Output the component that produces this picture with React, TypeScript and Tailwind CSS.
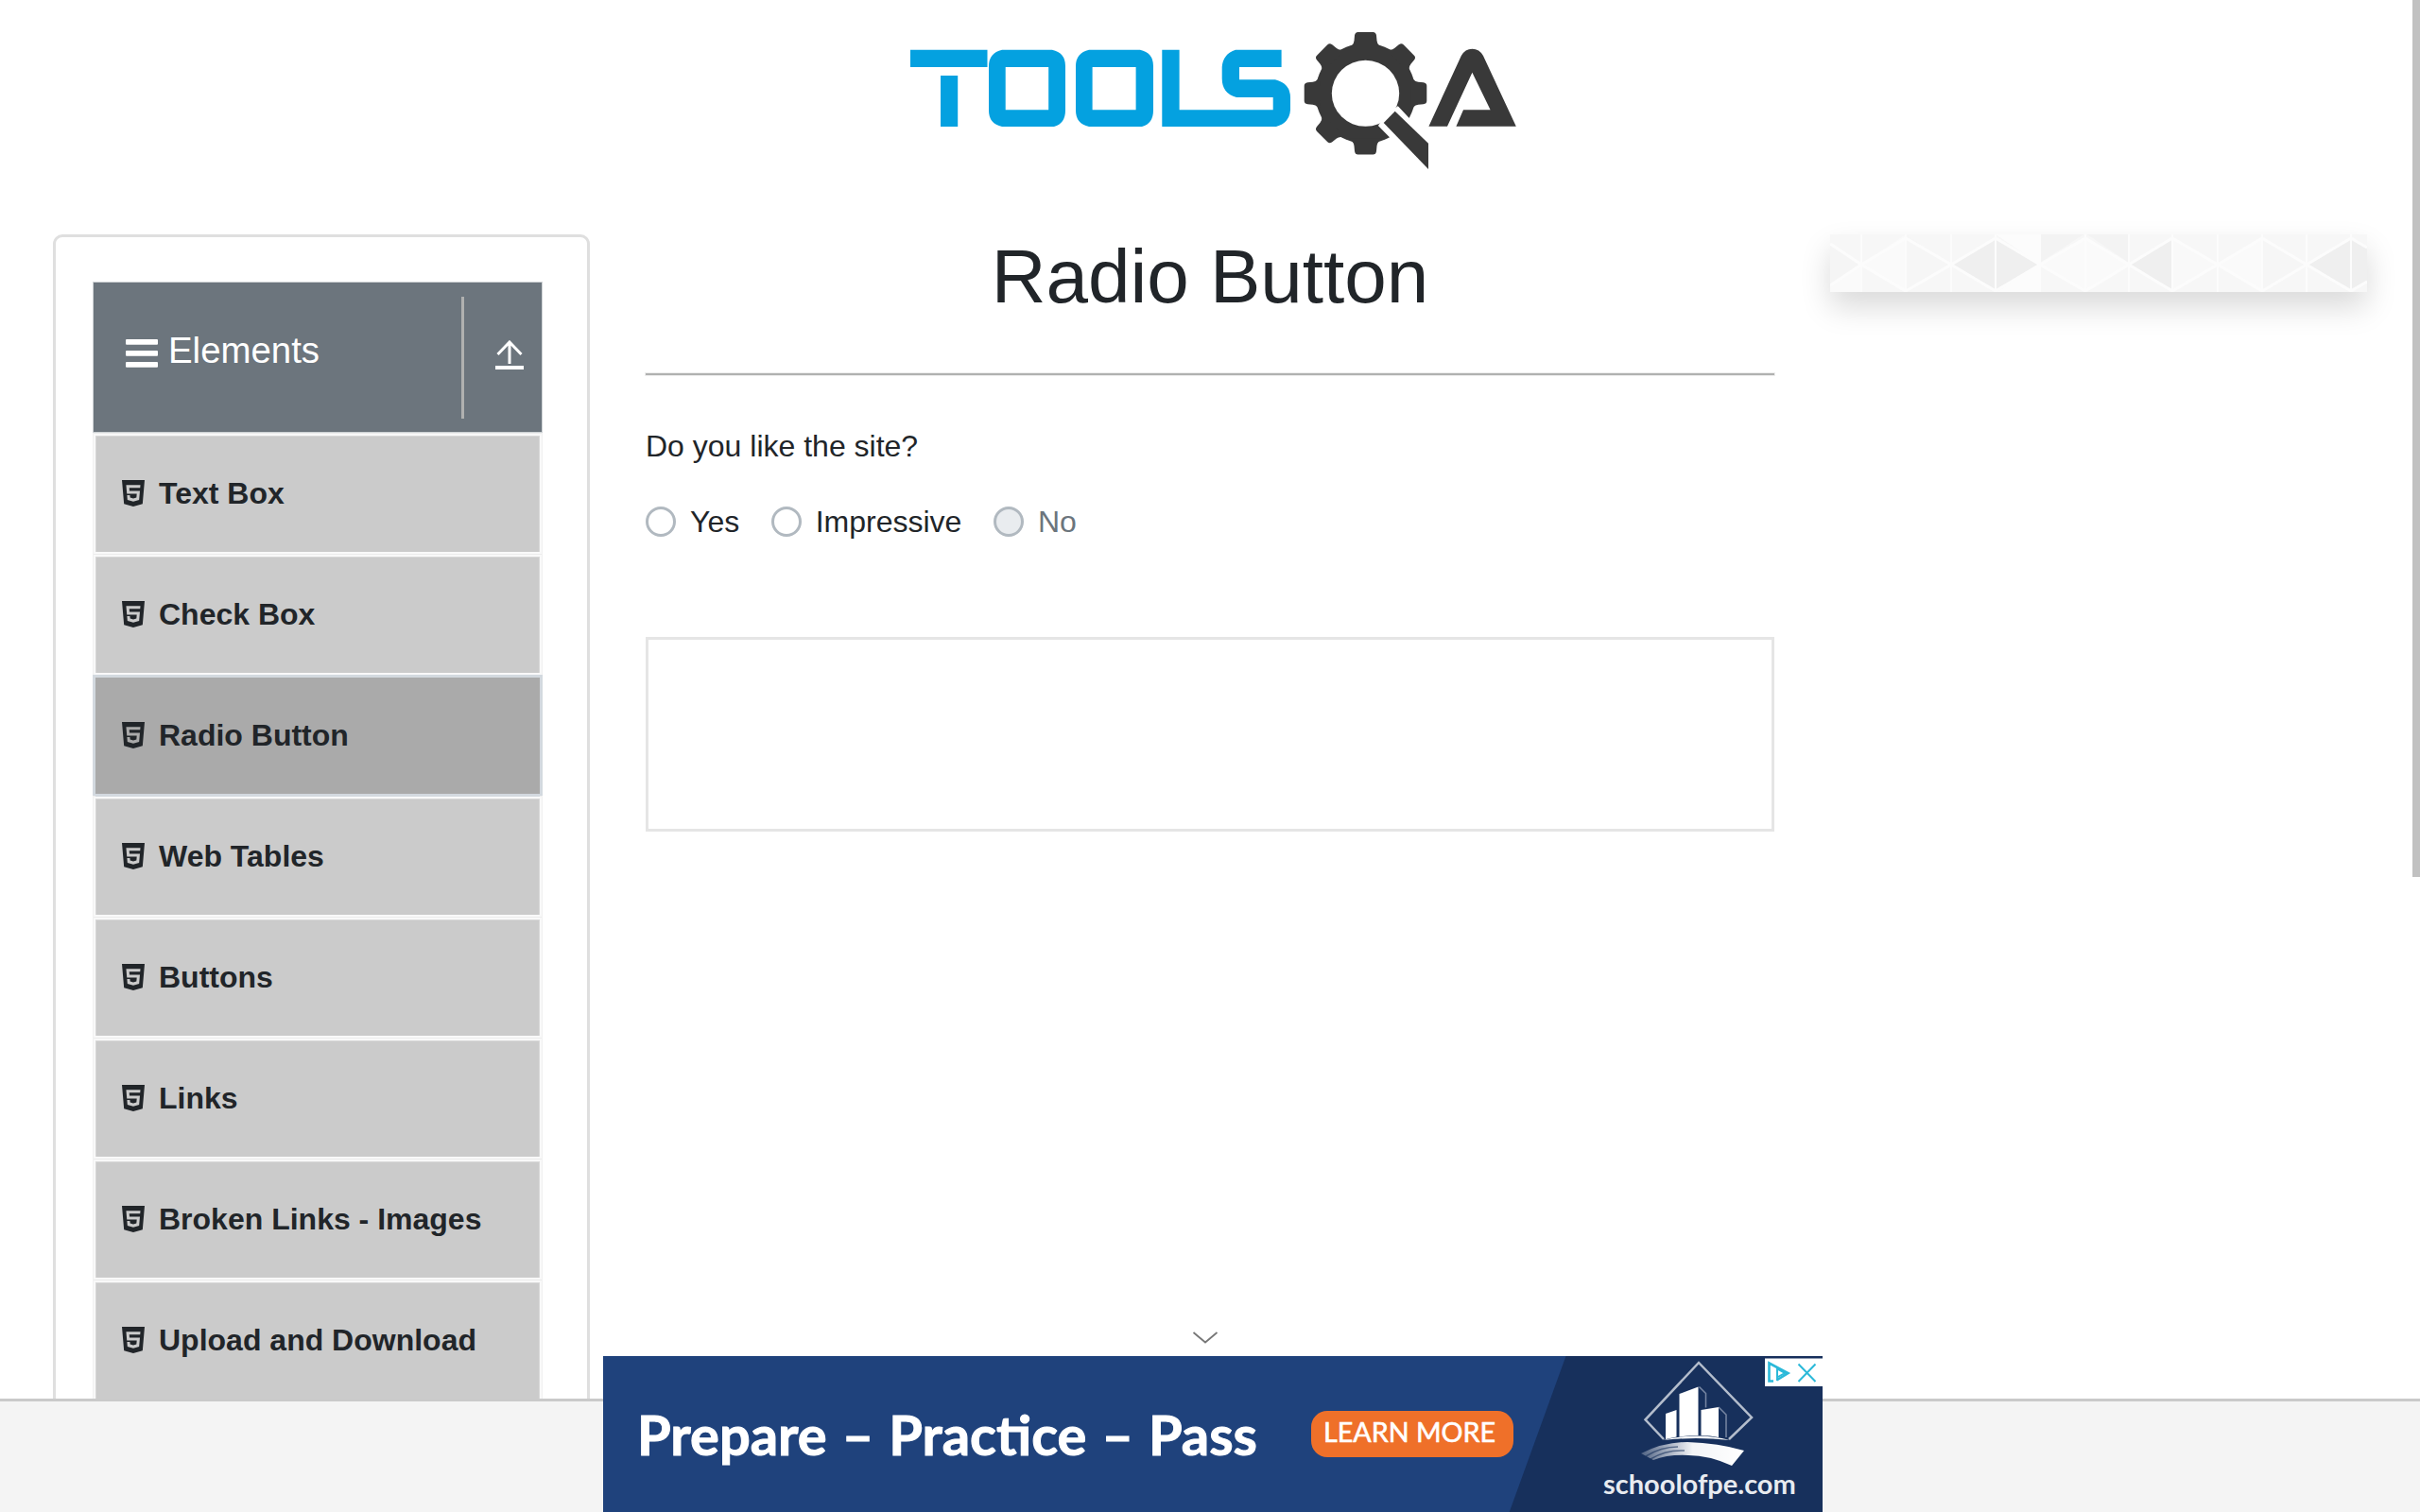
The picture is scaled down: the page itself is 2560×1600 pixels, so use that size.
import { IoLogoHtml5 } from "react-icons/io5";

const items = [
  "Text Box",
  "Check Box",
  "Radio Button",
  "Web Tables",
  "Buttons",
  "Links",
  "Broken Links - Images",
  "Upload and Download",
];

function Logo() {
  return (
    <svg width="644" height="150" viewBox="962 33 644 150" className="block">
      <g fill="#04a1e0">
        <path d="M963 52.7h81.5v18.3h-81.5zM995 80h18.2v54h-18.2z" />
        <path fillRule="evenodd" d="M1060 52.7h53q14 3 14 17v47q0 14-12 17.3h-55q-14-3-14-17v-47q0-14 14-17.3zM1063.7 71v45.3h45.5V71z" />
        <path fillRule="evenodd" d="M1152 52.7h54q14 3 14 17v47q0 14-12 17.3h-56q-14-3-14-17v-47q0-14 14-17.3zM1155.6 71v45.3h46V71z" />
        <path d="M1229.3 52.7h18.3v63.6h99.1V103H1308q-15.300-4-15.300-20V71q1-14 14.300-18.300h48.600V71H1311v13.300h38q16 4 16 19v13q-1 14-15 17.700h-120.700z" />
      </g>
      <g fill="#393939">
        <circle cx="1444.500" cy="98.800" r="53" />
        {[0, 45, 90, 180, 225, 270, 315].map((a) => (
          <path
            key={a}
            transform={`rotate(${a} 1444.500 98.800)`}
            d="M1424 51q8-2 8.500-8l.5-5.500q.5-3.500 3.500-3.500h16q3 0 3.500 3.500l.5 5.500q.5 6 8.500 8z"
          />
        ))}
        <ellipse cx="1444.500" cy="98.800" rx="35.700" ry="35" fill="#fff" />
        <path d="M1478.800 112.300l13.400 14.200 22 20v38l-44.500-39.500-11.800-12 8-12z" fill="#fff" />
        <path d="M1475.700 117.700L1463.700 130 1511 179v-27.300z" />
        <path d="M1511.400 133.700L1545.800 59q4-7.300 11.600-7.300T1569 59l34.800 74.700h-63.400l7.600-17.400h28.600l-19.200-39.600-26.400 57z" />
      </g>
    </svg>
  );
}

const tris: [string, string][] = [
  ["0,10 33,32 0,54", "#f5f5f5"],
  ["0,62 0,54 33,32 33,62", "#fafafa"],
  ["33,32 80,0 80,62", "#fafafa"],
  ["80,0 128,32 80,62", "#f6f6f6"],
  ["128,32 175,5 175,58", "#efefef"],
  ["175,5 222,32 175,58", "#efefef"],
  ["175,0 222,0 222,32", "#fcfcfc"],
  ["175,62 222,62 222,32", "#fcfcfc"],
  ["222,32 270,4 270,60", "#fafafa"],
  ["222,0 268,0 222,30", "#f3f3f3"],
  ["272,0 316,0 316,30", "#f3f3f3"],
  ["270,4 316,32 270,60", "#fafafa"],
  ["316,32 362,5 362,58", "#efefef"],
  ["362,4 410,32 362,60", "#f9f9f9"],
  ["410,32 457,4 457,60", "#fafafa"],
  ["457,4 504,32 457,60", "#f6f6f6"],
  ["504,32 551,5 551,58", "#efefef"],
  ["551,5 568,15 568,49 551,58", "#efefef"],
];

function Banner() {
  return (
    <svg width="568" height="61" viewBox="0 0 568 61" className="block">
      <rect width="568" height="62" fill="#f7f7f7" />
      {tris.map(([p, c]) => (
        <polygon key={p} points={p} fill={c} />
      ))}
      <g stroke="#fcfcfc" strokeWidth="3" fill="none">
        <path d="M0 10L33 32 0 54M33 32L80 4l48 28-48 28zM128 32l47-28 47 28-47 28zM222 32l48-28 46 28-46 28zM316 32l46-28 48 28-48 28zM410 32l47-28 47 28-47 28zM568 14l-17-10-47 28 47 28 17-10" />
        <path d="M33 0v62M80 0v62M128 0v62M175 0v62M222 0v62M270 0v62M316 0v62M362 0v62M410 0v62M457 0v62M504 0v62M551 0v62" strokeWidth="2" />
      </g>
    </svg>
  );
}

function Radio({ label, disabled = false }: { label: string; disabled?: boolean }) {
  return (
    <label className={disabled ? "flex h-12 items-center gap-[15px] text-[#6c757d]" : "flex h-12 items-center gap-[15px]"}>
      <span className={disabled ? "size-8 rounded-full border-[3px] border-[#b1b9c0] bg-[#e9ecef]" : "size-8 rounded-full border-[3px] border-[#b1b9c0] bg-white"} />
      <span>{label}</span>
    </label>
  );
}

function Ad() {
  return (
    <div className="relative h-[165px] w-[1290px] overflow-hidden bg-[#1f427c] font-[Lato] text-white">
      <svg width="1290" height="165" viewBox="638 1435 1290 165" className="absolute inset-0">
        <defs>
          <linearGradient id="swoosh">
            <stop offset="0" stopColor="#fff" stopOpacity="0.25" />
            <stop offset="0.5" stopColor="#fff" stopOpacity="0.95" />
            <stop offset="1" stopColor="#fff" />
          </linearGradient>
        </defs>
        <path d="M1656.500 1435H1928v165H1596.700z" fill="#17305c" />
        <path d="M1760 1523l-19.500-20.700 56.500-60.300 56 58-24 23" fill="none" stroke="#b4bdcc" strokeWidth="2.500" />
        <g fill="#fff">
          <path d="M1762 1496l11.500-4v28.500l-11.500 2.500zM1776.500 1475l20-7.500v51.500q-10 0-20 1.500zM1799.500 1492l18.500-3v32q-9-2-18.500-2z" />
          <path d="M1759 1524q37-9 71 0-36-4-71 0z" />
          <path d="M1736 1538q24-12 49-12 33 1 60 9l-13 16q-24-11-46-11-22-1-37 5z" fill="url(#swoosh)" />
        </g>
        <path d="M1741 1541q16-10 34-10M1746 1544q16-10 36-9" stroke="#17305c" strokeOpacity="0.6" strokeWidth="1.500" fill="none" />
        <path d="M1797.500 1467.500l7 7v15M1818 1489l8 8v24" stroke="#7887a3" strokeWidth="1.500" fill="none" />
        <path d="M1867 1437.500h61v29.500h-61z" fill="#fff" />
        <g fill="none" stroke="#2bb9d9">
          <path d="M1876 1461.500h-4.500v-19l20 10.500-12 7.500" strokeWidth="2.600" />
          <path d="M1880 1461v-12.500l8 4.500-8 4.500" strokeWidth="2" />
          <path d="M1902.500 1443.500l18 18.500M1920.500 1443.500l-18 18.500" strokeWidth="2" />
        </g>
      </svg>
      <div className="absolute top-[48px] left-[36px] text-[57.800px] leading-[70px] font-bold whitespace-nowrap [word-spacing:2px] [-webkit-text-stroke:1px_white]">Prepare – Practice – Pass</div>
      <div className="absolute top-[58px] left-[749px] flex h-[49px] w-[214px] items-center justify-center rounded-[17px] bg-[#ef7029] pr-1.5 pb-1.5 text-[28.700px] whitespace-nowrap [-webkit-text-stroke:0.6px_white]">LEARN MORE</div>
      <div className="absolute top-[117px] left-[1058px] text-[29px] leading-[36px] font-bold whitespace-nowrap text-[#e8ebf0]">schoolofpe.com</div>
    </div>
  );
}

export default function App() {
  return (
    <div className="relative h-[1600px] w-[2560px] overflow-hidden bg-white font-['Liberation_Sans',Arial,sans-serif] text-[32px] leading-[48px] text-[#212529]">
      <header className="flex h-[248px] pt-[33px] pl-[962px]">
        <Logo />
      </header>
      <div className="flex items-start pl-14">
        <aside className="h-[1400px] w-[568px] shrink-0 rounded-[10px] border-[3px] border-[#dfdfdf] px-[39px] pt-[47px]">
          <div className="w-[476px]">
            <div className="flex h-[160px] border border-[#ced2d5] bg-[#6c757d] text-white">
              <div className="flex flex-1 gap-[11px] pt-[60px] pl-[34px]">
                <svg width="34" height="30" viewBox="0 0 34 30">
                  <g fill="#fff">
                    <rect width="34" height="5.700" rx="1" />
                    <rect y="12" width="34" height="5.700" rx="1" />
                    <rect y="24" width="34" height="5.700" rx="1" />
                  </g>
                </svg>
                <span className="-mt-3 text-[38.400px]">Elements</span>
              </div>
              <div className="mt-[15px] h-[129px] w-[3px] bg-[#b0b1b0]" />
              <div className="w-[82px] pt-[61px] pl-[33px]">
                <svg width="30" height="32" viewBox="0 0 30 32" fill="none" stroke="#fff">
                  <path d="M2.500 15L15 2l12.500 13M15 2v23" strokeWidth="3" />
                  <path d="M0 29h30" strokeWidth="4" />
                </svg>
              </div>
            </div>
            <ul className="border-x border-[#f1f1f1] bg-[#f9f9f9]">
              {items.map((t) => (
                <li
                  key={t}
                  className={
                    t === "Radio Button"
                      ? "-mx-px flex h-32 flex-col border-x-[3px] border-[#d3d9df] bg-[#aaaaaa]"
                      : "flex h-32 flex-col border-t border-[#ececec] px-0.5 pt-0.5 pb-0.5"
                  }
                >
                  <div
                    className={
                      t === "Radio Button"
                        ? "flex h-[129px] shrink-0 items-center gap-[11px] border-y-[3px] border-[#d3d9df] bg-[#aaaaaa] pb-[2px] pl-[24px] font-bold"
                        : "flex h-[123px] items-center gap-[11px] border border-b-0 border-[#d8d8d8] bg-[#cbcbcb] pb-[3px] pl-[23px] font-bold"
                    }
                  >
                    <IoLogoHtml5 className="size-8 shrink-0" />
                    <span>{t}</span>
                  </div>
                </li>
              ))}
            </ul>
          </div>
        </aside>
        <main className="ml-[59px] w-[1194px] shrink-0">
          <h1 className="h-[146px] text-center text-[80px] leading-[90px]">Radio Button</h1>
          <div className="mt-px h-0.5 bg-[#b0b1b0] shadow-[0_0_0_1px_#eeeeee]" />
          <div className="mt-[51px]">Do you like the site?</div>
          <div className="mt-8 flex gap-[33.500px]">
            <Radio label="Yes" />
            <Radio label="Impressive" />
            <Radio label="No" disabled />
          </div>
          <div className="mt-[98px] h-[206px] border-[3px] border-[#e5e5e5]" />
        </main>
        <div className="ml-[59px] w-[568px] shrink-0 shadow-[0_16px_32px_rgba(0,0,0,0.15)]">
          <Banner />
        </div>
      </div>
      <footer className="absolute bottom-0 left-0 h-[120px] w-full border-t-[3px] border-[#cacaca] bg-[#f4f4f4]" />
      <div className="absolute bottom-0 left-[638px]">
        <svg width="28" height="14" viewBox="0 0 28 14" className="mb-[13px] ml-[623px] block" fill="none" stroke="#777" strokeWidth="1.800">
          <path d="M1.500 2L14 12.500 26.500 2" />
        </svg>
        <Ad />
      </div>
      <div className="absolute top-0 right-0 h-[928px] w-2 bg-[#c1c1c1]" />
    </div>
  );
}
